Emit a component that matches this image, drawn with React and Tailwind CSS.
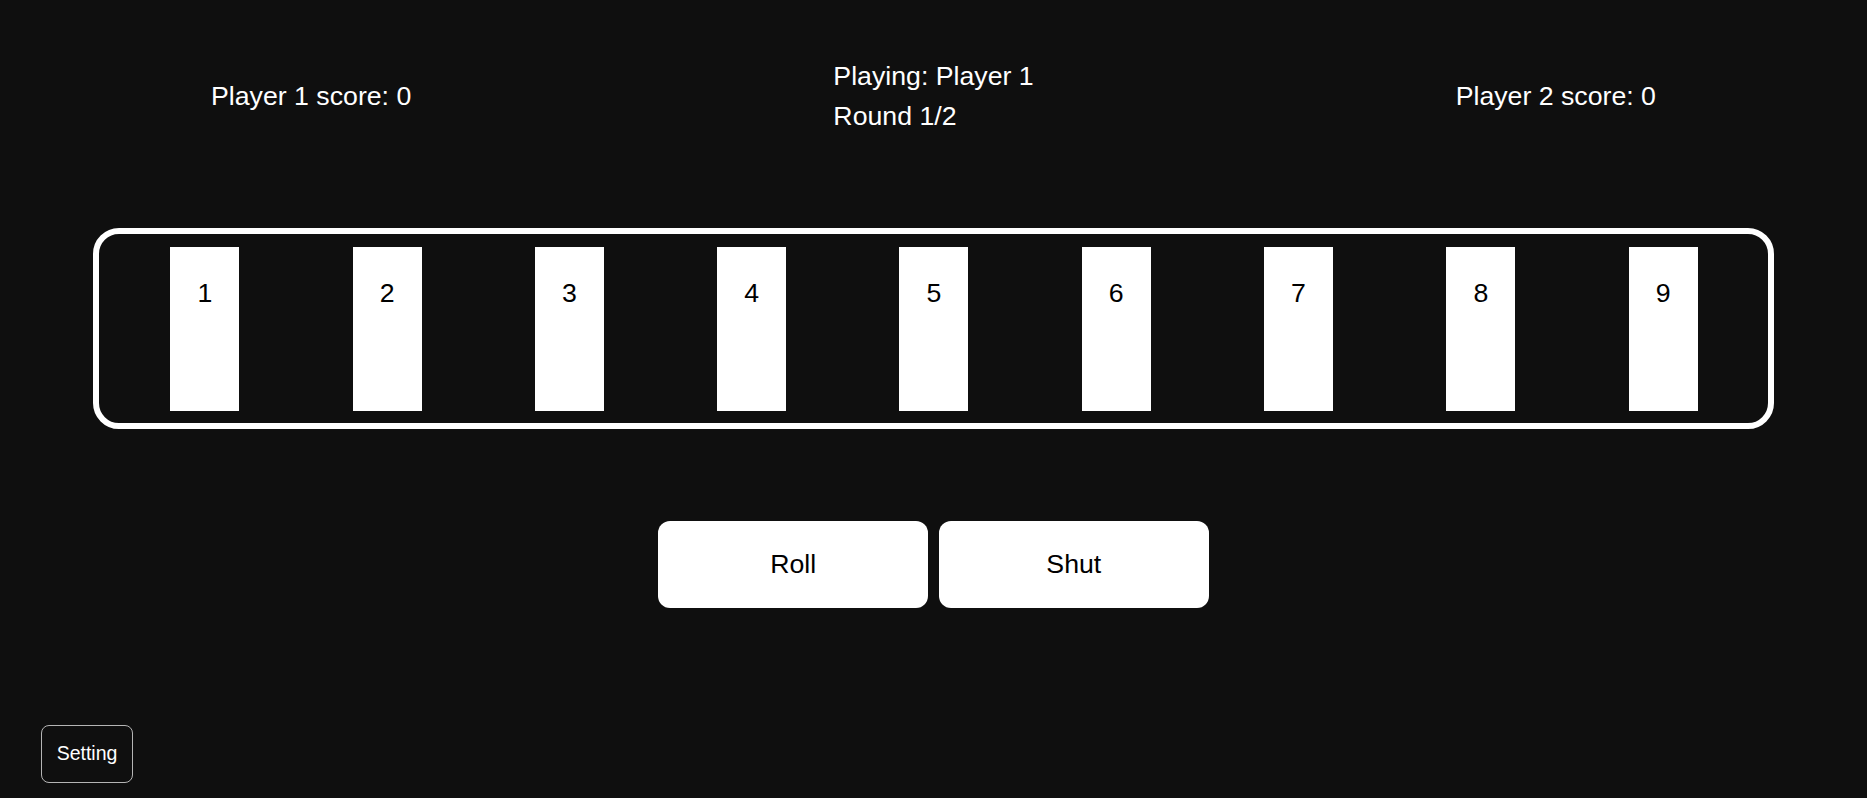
import React, { useState } from "react";

const tiles = [1, 2, 3, 4, 5, 6, 7, 8, 9];

export default function App() {
  const [player] = useState(1);
  const [round] = useState(1);
  const [scores] = useState({ p1: 0, p2: 0 });

  return (
    <div
      className="min-h-screen bg-[#0f0f0f] text-white flex flex-col"
      style={{ fontFamily: '"Liberation Sans", Arial, sans-serif' }}
    >
      {/* Header */}
      <div className="flex justify-around items-center pt-[56px] text-[26.7px] leading-[40px]">
        <div>Player 1 score: {scores.p1}</div>
        <div className="text-left">
          <div>Playing: Player {player}</div>
          <div>Round {round}/2</div>
        </div>
        <div>Player 2 score: {scores.p2}</div>
      </div>

      {/* Board */}
      <div className="w-[90%] mx-auto mt-[92px] border-[6px] border-white rounded-[26px] flex justify-between pl-[71px] pr-[70px] pt-[13px] pb-[12px]">
        {tiles.map((n) => (
          <div
            key={n}
            className="w-[69px] h-[164px] bg-white text-black text-center text-[26.7px] leading-[40px] pt-[26px]"
          >
            {n}
          </div>
        ))}
      </div>

      {/* Actions */}
      <div className="flex justify-center gap-[10.6px] mt-[92px]">
        <button className="w-[270px] h-[87px] bg-white text-black rounded-[12px] text-[26.7px]">
          Roll
        </button>
        <button className="w-[270px] h-[87px] bg-white text-black rounded-[12px] text-[26.7px]">
          Shut
        </button>
      </div>

      {/* Footer */}
      <div className="mt-auto pl-[41px] pb-[15px]">
        <button className="w-[92px] h-[58px] border border-[#b5b5b5] rounded-[8px] text-white text-[19.5px] flex items-center justify-center">
          Setting
        </button>
      </div>
    </div>
  );
}
